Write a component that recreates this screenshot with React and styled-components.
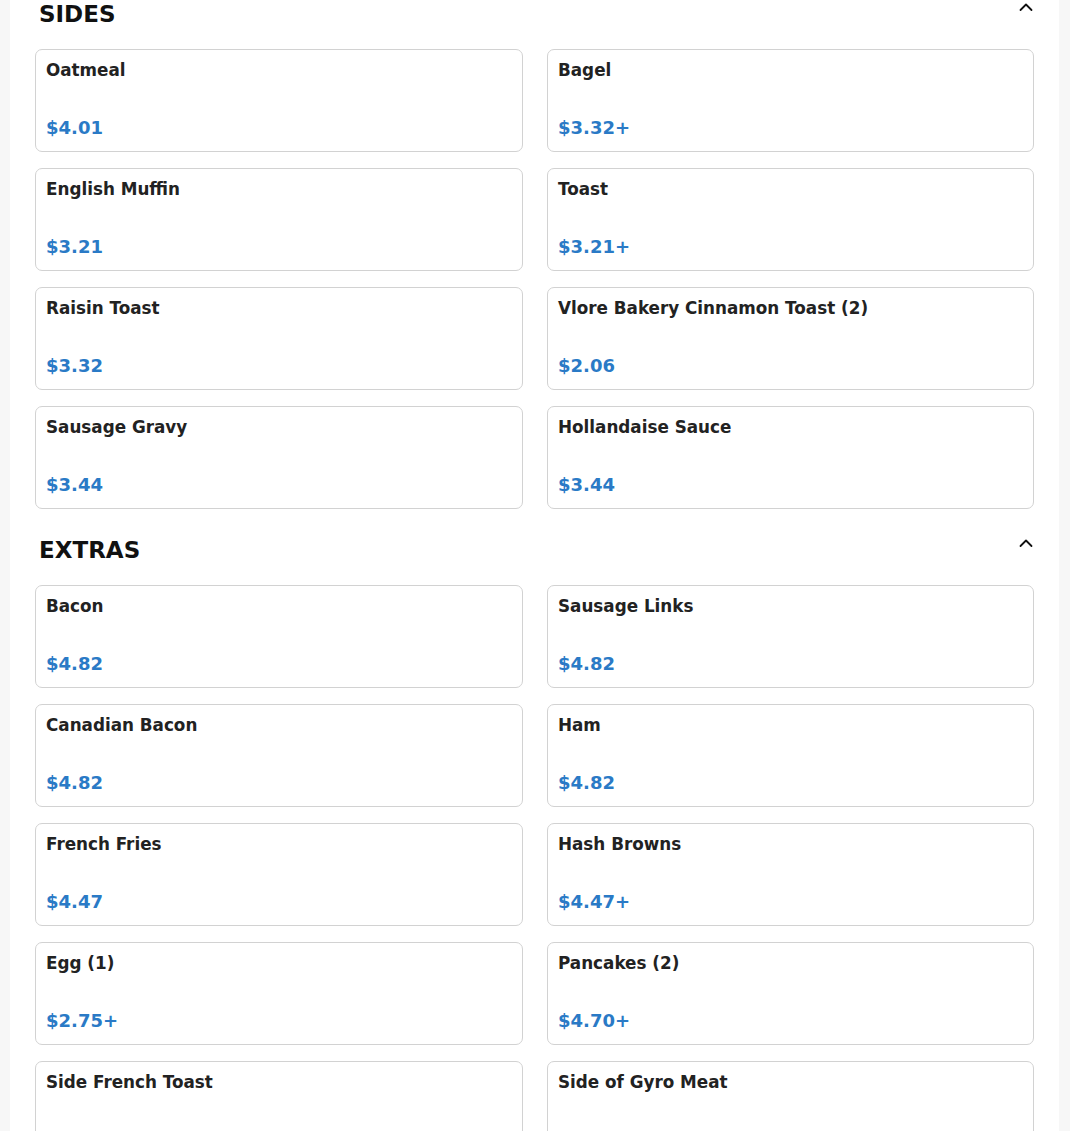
import React from 'react'
import styled, { createGlobalStyle } from "styled-components";

const GlobalStyle = createGlobalStyle`
	html, body {
		margin: 0;
		padding: 0;
		background: #f7f7f7;
		font-family: "DejaVu Sans", "Liberation Sans", sans-serif;
	}
`;

const Page = styled.div`
	padding: 0 11px 0 10px;
`;

const Panel = styled.div`
	background: #ffffff;
	padding: 0 25px 40px 25px;
`;

const Section = styled.section`
	padding-bottom: 27px;
`;

const Header = styled.div`
	display: flex;
	justify-content: space-between;
	align-items: flex-start;
	margin-bottom: 21px;
`;

const Title = styled.h2`
	margin: 0;
	padding-left: 4px;
	font-size: 23px;
	line-height: 28px;
	font-weight: bold;
	color: #111111;
	letter-spacing: 0;
`;

const Toggle = styled.button`
	border: none;
	background: none;
	padding: 0;
	margin-right: 1px;
	width: 14px;
	height: 14px;
	display: flex;
	align-items: center;
	justify-content: center;
	cursor: pointer;
`;

const Grid = styled.div`
	display: grid;
	grid-template-columns: 488px 1fr;
	column-gap: 24px;
	row-gap: 16px;
`;

const Card = styled.div`
	height: 103px;
	box-sizing: border-box;
	border: 1px solid #d2d2d2;
	border-radius: 7px;
	padding: 10px 10px 12px;
	display: flex;
	flex-direction: column;
	justify-content: space-between;
`;

const Name = styled.div`
	font-size: 16.8px;
	line-height: 20px;
	font-weight: bold;
	color: #222222;
`;

const Price = styled.div`
	font-size: 18px;
	line-height: 22px;
	font-weight: bold;
	color: #2a7ac6;
`;

const sections = [
	{
		title: "SIDES",
		items: [
			["Oatmeal", "$4.01"],
			["Bagel", "$3.32+"],
			["English Muffin", "$3.21"],
			["Toast", "$3.21+"],
			["Raisin Toast", "$3.32"],
			["Vlore Bakery Cinnamon Toast (2)", "$2.06"],
			["Sausage Gravy", "$3.44"],
			["Hollandaise Sauce", "$3.44"],
		],
	},
	{
		title: "EXTRAS",
		items: [
			["Bacon", "$4.82"],
			["Sausage Links", "$4.82"],
			["Canadian Bacon", "$4.82"],
			["Ham", "$4.82"],
			["French Fries", "$4.47"],
			["Hash Browns", "$4.47+"],
			["Egg (1)", "$2.75+"],
			["Pancakes (2)", "$4.70+"],
			["Side French Toast", "$4.47"],
			["Side of Gyro Meat", "$5.50"],
		],
	},
];

const ChevronUp = () => (
	<svg width="14" height="14" viewBox="0 0 14 14" fill="none">
		<path d="M1.5 10 L7 4.5 L12.5 10" stroke="#111" strokeWidth="1.8" strokeLinecap="round" strokeLinejoin="round" />
	</svg>
);

const App = () => {
	return (
		<Page>
			<GlobalStyle />
			<Panel>
				{sections.map((section) => (
					<Section key={section.title}>
						<Header>
							<Title>{section.title}</Title>
							<Toggle aria-label="Collapse">
								<ChevronUp />
							</Toggle>
						</Header>
						<Grid>
							{section.items.map(([name, price]) => (
								<Card key={name}>
									<Name>{name}</Name>
									<Price>{price}</Price>
								</Card>
							))}
						</Grid>
					</Section>
				))}
			</Panel>
		</Page>
	);
}

export default App
